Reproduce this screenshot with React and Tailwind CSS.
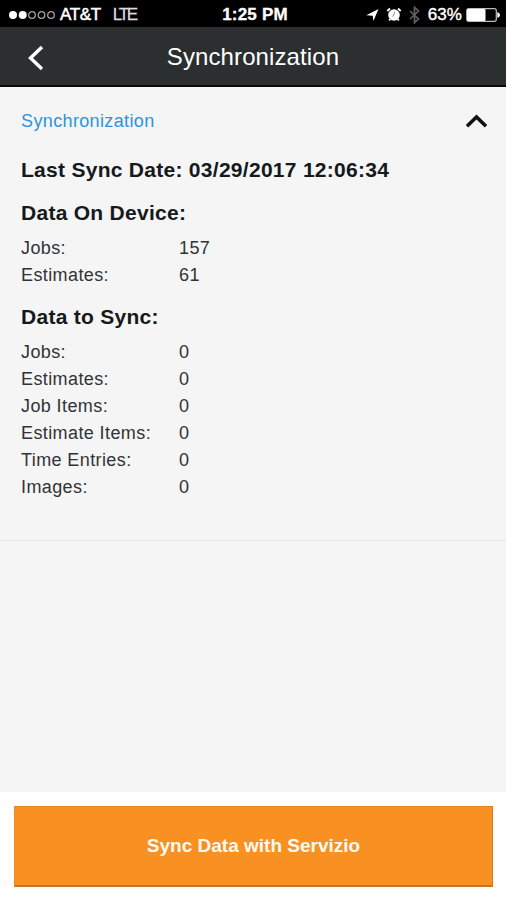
const deviceRows = [
  ['Jobs:', '157'],
  ['Estimates:', '61'],
];

const syncRows = [
  ['Jobs:', '0'],
  ['Estimates:', '0'],
  ['Job Items:', '0'],
  ['Estimate Items:', '0'],
  ['Time Entries:', '0'],
  ['Images:', '0'],
];

function SignalDots() {
  return (
    <svg className="ml-[9px] h-[10px] w-[47px]" viewBox="0 0 47 10">
      <circle cx="4" cy="5" r="4" fill="#fff" />
      <circle cx="13.7" cy="5" r="4" fill="#fff" />
      <g fill="none" stroke="#a3a3a3" strokeWidth="1.3">
        <circle cx="23" cy="5" r="3.3" />
        <circle cx="32.5" cy="5" r="3.3" />
        <circle cx="42" cy="5" r="3.3" />
      </g>
    </svg>
  );
}

function StatusBar() {
  return (
    <div className="grid h-[27px] grid-cols-3 items-center bg-black text-white">
      <div className="flex items-center pt-[2px]">
        <SignalDots />
        <span className="ml-1 text-[17px] leading-5 tracking-[-0.35px] [-webkit-text-stroke:0.5px_#fff]">AT&amp;T</span>
        <span className="ml-3 text-[17px] leading-5 tracking-[-2.3px] text-[#dddddd] [-webkit-text-stroke:0.3px_#ddd]">LTE</span>
      </div>
      <div className="pt-[2px] pl-[4px] text-center text-[17px] leading-5 font-bold tracking-[0.2px] [-webkit-text-stroke:0.3px_#fff]">1:25 PM</div>
      <div className="flex items-center justify-end pt-[2px] pr-[6px]">
        <svg className="h-[12px] w-[13px]" viewBox="0 0 13 12">
          <path d="M12.5 0 L7.4 12 L6.7 6.8 L0.3 6.2 Z" fill="#fff" />
        </svg>
        <svg className="ml-[7px] h-[15px] w-[16px]" viewBox="0 0 16 15">
          <circle cx="8" cy="8" r="5.8" fill="#fff" />
          <path d="M1.3 4 L4 1.5 M12 1.5 L14.7 4 M4.2 12 L3.2 13.6 M11.8 12 L12.8 13.6" stroke="#fff" strokeWidth="1.8" />
          <path d="M8.7 4.5 L7.6 8.4 L6.2 9.4" fill="none" stroke="#888" strokeWidth="1" />
        </svg>
        <svg className="ml-[7px] h-[18px] w-[11px]" viewBox="0 0 11 18">
          <path d="M1 5 L9.5 13 L5.5 16.7 V1.3 L9.5 5 L1 13" fill="none" stroke="#606060" strokeWidth="1.7" />
        </svg>
        <span className="ml-[8px] text-[17px] leading-5 tracking-[0.1px] [-webkit-text-stroke:0.4px_#fff]">63%</span>
        <svg className="ml-[4px] h-[14px] w-[34px]" viewBox="0 0 34 14">
          <rect x="0.7" y="0.7" width="29.6" height="12.6" rx="2" fill="none" stroke="#bdbdbd" strokeWidth="1.2" />
          <rect x="1" y="1" width="18.5" height="12" rx="1" fill="#fff" />
          <path d="M31.3 4 Q34 5 34 7 Q34 9 31.3 10 Z" fill="#fff" />
        </svg>
      </div>
    </div>
  );
}

function DataRows({ rows }) {
  return (
    <dl className="text-[18px] leading-[27px] tracking-[0.4px] text-[#303437]">
      {rows.map(([label, value]) => (
        <div key={label} className="flex">
          <dt className="w-[158px]">{label}</dt>
          <dd>{value}</dd>
        </div>
      ))}
    </dl>
  );
}

export default function App() {
  return (
    <div className="flex h-[900px] w-[506px] flex-col overflow-hidden bg-white font-['Liberation_Sans',Arial,sans-serif]">
      <StatusBar />
      <header className="grid h-[60px] grid-cols-[80px_1fr_80px] items-center border-b-2 border-[#080a0a] bg-[#2b2f30] text-white">
        <svg className="ml-[27px] mt-[4px] h-[26px] w-[18px]" viewBox="0 0 18 26">
          <path d="M15 2 L3.5 13 L15 24" fill="none" stroke="#fff" strokeWidth="3.4" />
        </svg>
        <h1 className="pt-[2px] text-center text-[24px] leading-[30px] tracking-[0.1px]">Synchronization</h1>
      </header>
      <main className="flex-1 bg-[#f5f5f5]">
        <section className="h-[454px] border-b border-[#e9e9e9] pr-[18px] pl-[21px] pt-[22px]">
          <div className="flex items-center justify-between">
            <h2 className="text-[18px] leading-6 tracking-[0.37px] text-[#2c94dc]">Synchronization</h2>
            <svg className="h-[16px] w-[24px]" viewBox="0 0 24 16">
              <path d="M3 13.2 L12.5 4 L22 13.2" fill="none" stroke="#111" strokeWidth="3.6" />
            </svg>
          </div>
          <h3 className="mt-[23px] text-[21px] leading-7 font-bold tracking-[0.28px] text-[#15191c]">Last Sync Date: 03/29/2017 12:06:34</h3>
          <h3 className="mt-[15px] mb-[8px] text-[21px] leading-7 font-bold tracking-[0.28px] text-[#15191c]">Data On Device:</h3>
          <DataRows rows={deviceRows} />
          <h3 className="mt-[14px] mb-[8px] text-[21px] leading-7 font-bold tracking-[0.28px] text-[#15191c]">Data to Sync:</h3>
          <DataRows rows={syncRows} />
        </section>
      </main>
      <footer className="h-[108px] bg-white pt-[14px] pr-[13px] pl-[14px]">
        <button className="block h-[81px] w-full border border-t-[#e98818] border-r-[#d47a1c] border-b-2 border-b-[#c47628] border-l-[#ef8b1b] bg-[#f89122] text-[19px] leading-6 font-bold text-[#fffaf0]">
          Sync Data with Servizio
        </button>
      </footer>
    </div>
  );
}
